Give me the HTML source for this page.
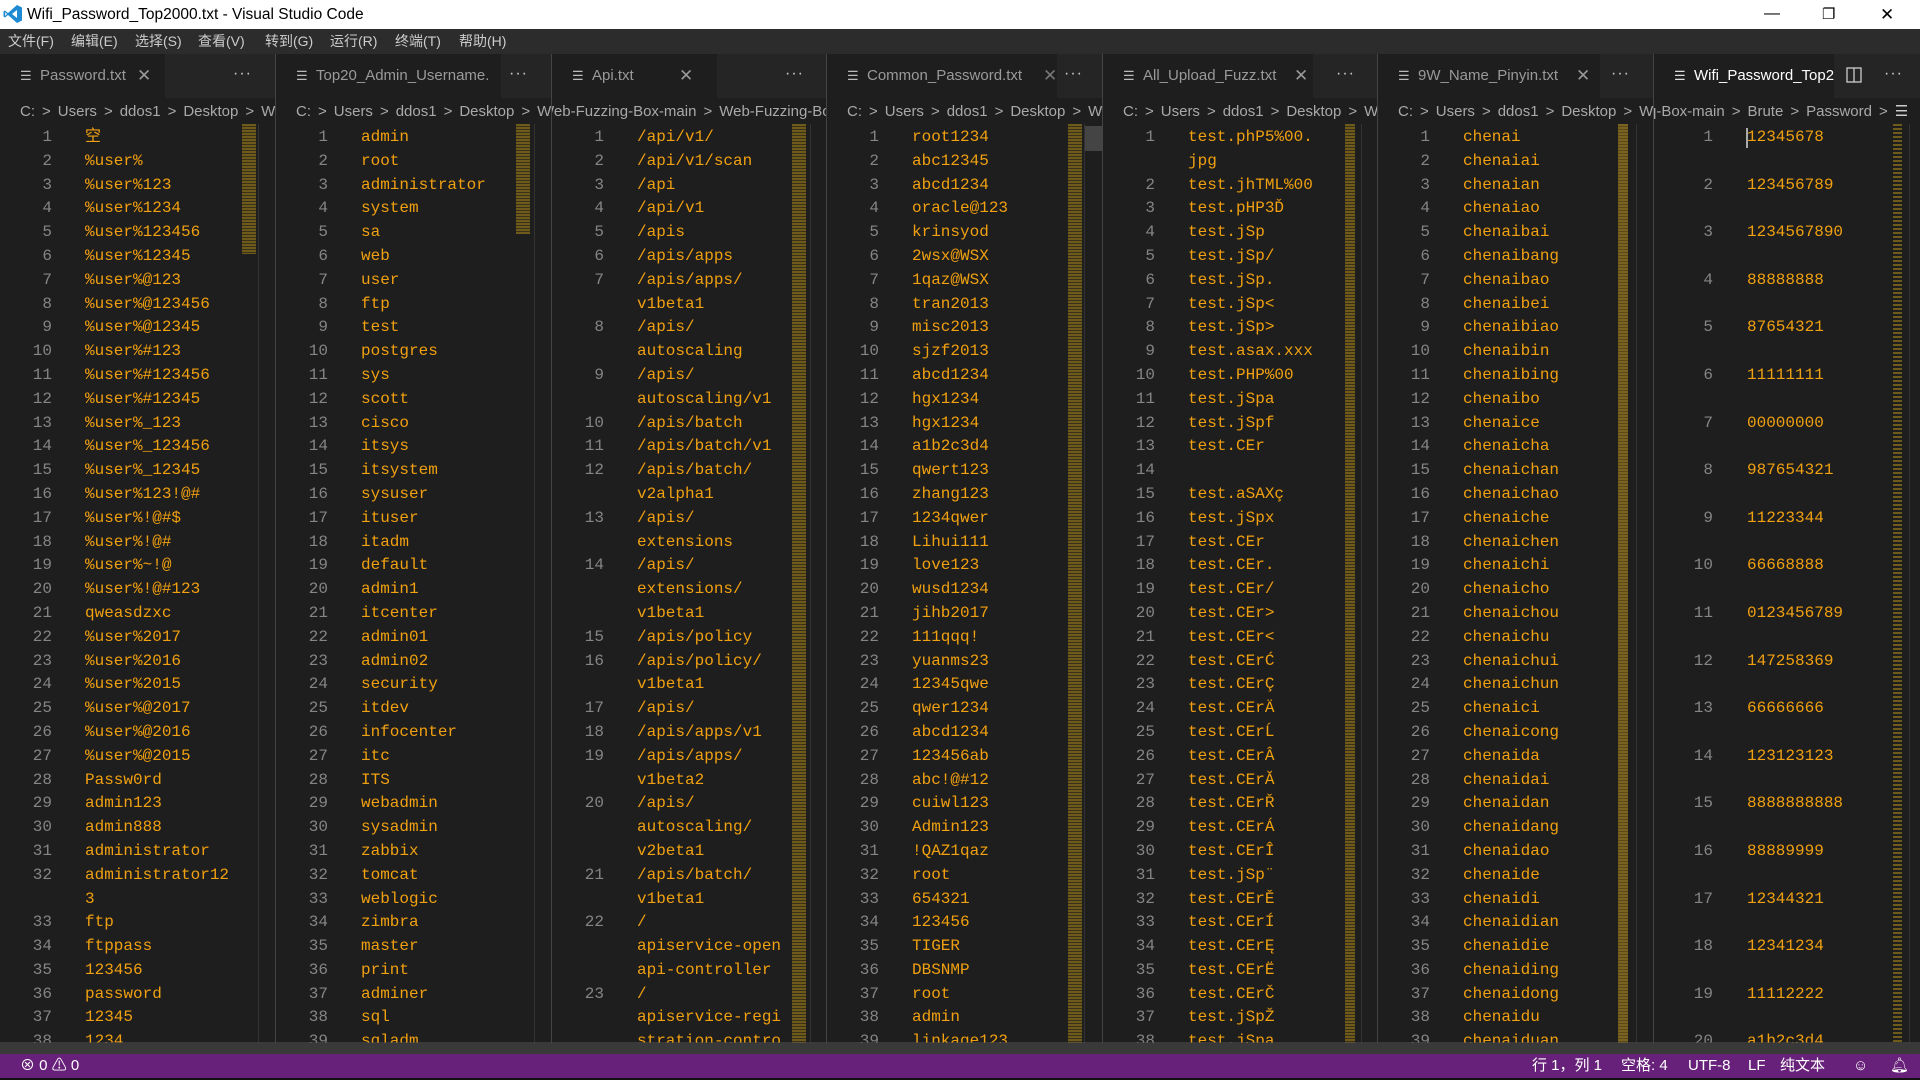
<!DOCTYPE html>
<html><head><meta charset="utf-8"><style>
*{margin:0;padding:0;box-sizing:border-box}
body{width:1920px;height:1080px;overflow:hidden;background:#1e1e1e;font-family:"Liberation Sans","Noto Sans CJK SC",sans-serif;position:relative}
#title{position:absolute;left:0;top:0;width:1920px;height:29px;background:#fff;color:#000;font-size:15.5px;line-height:29px}
#menu{position:absolute;left:0;top:29px;width:1920px;height:25px;background:#2c2c2c;color:#ccc;font-size:14px;line-height:25px}
#menu span{position:absolute;top:0}
.g{position:absolute;top:54px;height:989px;overflow:hidden;background:#1e1e1e;border-left:1px solid #444}
.tb{position:absolute;left:0;top:0;right:0;height:44px;background:#252526}
.tab{position:absolute;left:0;top:0;height:44px;width:165px;background:#1e1e1e;color:#9a9a9a;font-size:15px;line-height:44px;white-space:nowrap;overflow:hidden}
.tab .ic{position:absolute;left:20px;top:0;color:#bbb;font-size:13px}
.tab .nm{position:absolute;left:40px}
.tab .x{position:absolute;left:137px;color:#999;font-size:17px}
.dots{position:absolute;top:0;line-height:40px;color:#ccc;font-size:16px;letter-spacing:1px}
.bc{position:absolute;left:0;top:46px;height:24px;right:0;color:#a9a9a9;font-size:15px;line-height:24px;white-space:nowrap;overflow:hidden;padding-left:20px}
.bc s{text-decoration:none;margin:0 7px;color:#aaa}
.ed{position:absolute;left:0;top:72px;right:0;font-family:"Liberation Mono","Noto Sans CJK SC",monospace;font-size:16px}
.r{height:23.8px;line-height:23.8px;white-space:pre;position:relative;color:#f0a010;overflow:hidden}
.r i{font-style:normal;color:#858585;position:absolute;left:0;width:52px;text-align:right}
.r b{font-weight:normal;position:absolute;left:85px}
.mm{position:absolute;top:70px;width:14px;height:919px;background:repeating-linear-gradient(180deg,#6e5a1a 0 2px,#3a3218 2px 3px)}
.vs{position:absolute;top:70px;width:1px;height:919px;background:#333}
#hs{position:absolute;left:0;top:1042px;width:1920px;height:12px;background:rgba(80,80,80,.55)}
#st{position:absolute;left:0;top:1054px;width:1920px;height:24px;background:#68217a;color:#fff;font-size:15px;line-height:24px}
#st span{position:absolute;top:0}
#bot{position:absolute;left:0;top:1078px;width:1920px;height:2px;background:#111}
</style></head><body>
<div id="title">
<svg style="position:absolute;left:3px;top:4px" width="20" height="20" viewBox="0 0 20 20"><path d="M14 1 L19 3.5 V16.5 L14 19 L5 11 L2 13.5 L0.5 12.5 V7.5 L2 6.5 L5 9 Z M14 6 L9 10 L14 14 Z M2.2 8 V12 L4 10Z" fill="#1f8ad2" fill-rule="evenodd"/></svg>
<span style="position:absolute;left:27px">Wifi_Password_Top2000.txt - Visual Studio Code</span>
<span style="position:absolute;left:1764px;top:-1px;font-size:16px">—</span>
<span style="position:absolute;left:1822px;font-size:15px">❐</span>
<span style="position:absolute;left:1880px;font-size:17px">✕</span>
</div>
<div id="menu">
<span style="left:8px">文件(F)</span><span style="left:71px">编辑(E)</span><span style="left:135px">选择(S)</span><span style="left:198px">查看(V)</span><span style="left:265px">转到(G)</span><span style="left:330px">运行(R)</span><span style="left:395px">终端(T)</span><span style="left:459px">帮助(H)</span>
</div>

<!-- group 1 -->
<div class="g" style="left:0;width:276px;border-left:none">
<div class="tb"><div class="tab"><span class="ic">☰</span><span class="nm">Password.txt</span><span class="x">✕</span></div><span class="dots" style="left:233px">···</span></div>
<div class="bc">C:<s>&gt;</s>Users<s>&gt;</s>ddos1<s>&gt;</s>Desktop<s>&gt;</s>Web-Fuzzing</div>
<div class="ed">
<div class="r"><i>1</i><b>空</b></div><div class="r"><i>2</i><b>%user%</b></div><div class="r"><i>3</i><b>%user%123</b></div><div class="r"><i>4</i><b>%user%1234</b></div><div class="r"><i>5</i><b>%user%123456</b></div><div class="r"><i>6</i><b>%user%12345</b></div><div class="r"><i>7</i><b>%user%@123</b></div><div class="r"><i>8</i><b>%user%@123456</b></div><div class="r"><i>9</i><b>%user%@12345</b></div><div class="r"><i>10</i><b>%user%#123</b></div><div class="r"><i>11</i><b>%user%#123456</b></div><div class="r"><i>12</i><b>%user%#12345</b></div><div class="r"><i>13</i><b>%user%_123</b></div><div class="r"><i>14</i><b>%user%_123456</b></div><div class="r"><i>15</i><b>%user%_12345</b></div><div class="r"><i>16</i><b>%user%123!@#</b></div><div class="r"><i>17</i><b>%user%!@#$</b></div><div class="r"><i>18</i><b>%user%!@#</b></div><div class="r"><i>19</i><b>%user%~!@</b></div><div class="r"><i>20</i><b>%user%!@#123</b></div><div class="r"><i>21</i><b>qweasdzxc</b></div><div class="r"><i>22</i><b>%user%2017</b></div><div class="r"><i>23</i><b>%user%2016</b></div><div class="r"><i>24</i><b>%user%2015</b></div><div class="r"><i>25</i><b>%user%@2017</b></div><div class="r"><i>26</i><b>%user%@2016</b></div><div class="r"><i>27</i><b>%user%@2015</b></div><div class="r"><i>28</i><b>Passw0rd</b></div><div class="r"><i>29</i><b>admin123</b></div><div class="r"><i>30</i><b>admin888</b></div><div class="r"><i>31</i><b>administrator</b></div><div class="r"><i>32</i><b>administrator12</b></div><div class="r"><i></i><b>3</b></div><div class="r"><i>33</i><b>ftp</b></div><div class="r"><i>34</i><b>ftppass</b></div><div class="r"><i>35</i><b>123456</b></div><div class="r"><i>36</i><b>password</b></div><div class="r"><i>37</i><b>12345</b></div><div class="r"><i>38</i><b>1234</b></div><div class="r"><i>39</i><b>123</b></div>
</div>
<div class="mm" style="left:242px;height:130px"></div><div class="vs" style="left:258px"></div>
</div>

<!-- group 2 -->
<div class="g" style="left:275px;width:276px">
<div class="tb"><div class="tab" style="width:225px"><span class="ic">☰</span><span class="nm">Top20_Admin_Username.</span></div><span class="dots" style="left:233px">···</span></div>
<div class="bc">C:<s>&gt;</s>Users<s>&gt;</s>ddos1<s>&gt;</s>Desktop<s>&gt;</s>Web-Fuzzing</div>
<div class="ed">
<div class="r"><i>1</i><b>admin</b></div><div class="r"><i>2</i><b>root</b></div><div class="r"><i>3</i><b>administrator</b></div><div class="r"><i>4</i><b>system</b></div><div class="r"><i>5</i><b>sa</b></div><div class="r"><i>6</i><b>web</b></div><div class="r"><i>7</i><b>user</b></div><div class="r"><i>8</i><b>ftp</b></div><div class="r"><i>9</i><b>test</b></div><div class="r"><i>10</i><b>postgres</b></div><div class="r"><i>11</i><b>sys</b></div><div class="r"><i>12</i><b>scott</b></div><div class="r"><i>13</i><b>cisco</b></div><div class="r"><i>14</i><b>itsys</b></div><div class="r"><i>15</i><b>itsystem</b></div><div class="r"><i>16</i><b>sysuser</b></div><div class="r"><i>17</i><b>ituser</b></div><div class="r"><i>18</i><b>itadm</b></div><div class="r"><i>19</i><b>default</b></div><div class="r"><i>20</i><b>admin1</b></div><div class="r"><i>21</i><b>itcenter</b></div><div class="r"><i>22</i><b>admin01</b></div><div class="r"><i>23</i><b>admin02</b></div><div class="r"><i>24</i><b>security</b></div><div class="r"><i>25</i><b>itdev</b></div><div class="r"><i>26</i><b>infocenter</b></div><div class="r"><i>27</i><b>itc</b></div><div class="r"><i>28</i><b>ITS</b></div><div class="r"><i>29</i><b>webadmin</b></div><div class="r"><i>30</i><b>sysadmin</b></div><div class="r"><i>31</i><b>zabbix</b></div><div class="r"><i>32</i><b>tomcat</b></div><div class="r"><i>33</i><b>weblogic</b></div><div class="r"><i>34</i><b>zimbra</b></div><div class="r"><i>35</i><b>master</b></div><div class="r"><i>36</i><b>print</b></div><div class="r"><i>37</i><b>adminer</b></div><div class="r"><i>38</i><b>sql</b></div><div class="r"><i>39</i><b>sqladm</b></div><div class="r"><i>40</i><b>sqladmin</b></div>
</div>
<div class="mm" style="left:240px;height:110px"></div><div class="vs" style="left:258px"></div>
</div>

<!-- group 3 -->
<div class="g" style="left:551px;width:276px">
<div class="tb"><div class="tab"><span class="ic">☰</span><span class="nm">Api.txt</span><span class="x" style="left:127px">✕</span></div><span class="dots" style="left:233px">···</span></div>
<div class="bc" style="padding-left:0;text-indent:-12px">Web-Fuzzing-Box-main<s>&gt;</s>Web-Fuzzing-Box</div>
<div class="ed">
<div class="r"><i>1</i><b>/api/v1/</b></div><div class="r"><i>2</i><b>/api/v1/scan</b></div><div class="r"><i>3</i><b>/api</b></div><div class="r"><i>4</i><b>/api/v1</b></div><div class="r"><i>5</i><b>/apis</b></div><div class="r"><i>6</i><b>/apis/apps</b></div><div class="r"><i>7</i><b>/apis/apps/</b></div><div class="r"><i></i><b>v1beta1</b></div><div class="r"><i>8</i><b>/apis/</b></div><div class="r"><i></i><b>autoscaling</b></div><div class="r"><i>9</i><b>/apis/</b></div><div class="r"><i></i><b>autoscaling/v1</b></div><div class="r"><i>10</i><b>/apis/batch</b></div><div class="r"><i>11</i><b>/apis/batch/v1</b></div><div class="r"><i>12</i><b>/apis/batch/</b></div><div class="r"><i></i><b>v2alpha1</b></div><div class="r"><i>13</i><b>/apis/</b></div><div class="r"><i></i><b>extensions</b></div><div class="r"><i>14</i><b>/apis/</b></div><div class="r"><i></i><b>extensions/</b></div><div class="r"><i></i><b>v1beta1</b></div><div class="r"><i>15</i><b>/apis/policy</b></div><div class="r"><i>16</i><b>/apis/policy/</b></div><div class="r"><i></i><b>v1beta1</b></div><div class="r"><i>17</i><b>/apis/</b></div><div class="r"><i>18</i><b>/apis/apps/v1</b></div><div class="r"><i>19</i><b>/apis/apps/</b></div><div class="r"><i></i><b>v1beta2</b></div><div class="r"><i>20</i><b>/apis/</b></div><div class="r"><i></i><b>autoscaling/</b></div><div class="r"><i></i><b>v2beta1</b></div><div class="r"><i>21</i><b>/apis/batch/</b></div><div class="r"><i></i><b>v1beta1</b></div><div class="r"><i>22</i><b>/</b></div><div class="r"><i></i><b>apiservice-open</b></div><div class="r"><i></i><b>api-controller</b></div><div class="r"><i>23</i><b>/</b></div><div class="r"><i></i><b>apiservice-regi</b></div><div class="r"><i></i><b>stration-contro</b></div><div class="r"><i></i><b>ller</b></div>
</div>
<div class="mm" style="left:240px"></div><div class="vs" style="left:258px"></div>
</div>

<!-- group 4 -->
<div class="g" style="left:826px;width:276px">
<div class="tb"><div class="tab" style="width:230px"><span class="ic">☰</span><span class="nm">Common_Password.txt</span><span class="x" style="left:216px;color:#777">✕</span></div><span class="dots" style="left:233px;background:#252526;padding:0 4px">···</span></div>
<div class="bc">C:<s>&gt;</s>Users<s>&gt;</s>ddos1<s>&gt;</s>Desktop<s>&gt;</s>Web-Fuzzing</div>
<div class="ed">
<div class="r"><i>1</i><b>root1234</b></div><div class="r"><i>2</i><b>abc12345</b></div><div class="r"><i>3</i><b>abcd1234</b></div><div class="r"><i>4</i><b>oracle@123</b></div><div class="r"><i>5</i><b>krinsyod</b></div><div class="r"><i>6</i><b>2wsx@WSX</b></div><div class="r"><i>7</i><b>1qaz@WSX</b></div><div class="r"><i>8</i><b>tran2013</b></div><div class="r"><i>9</i><b>misc2013</b></div><div class="r"><i>10</i><b>sjzf2013</b></div><div class="r"><i>11</i><b>abcd1234</b></div><div class="r"><i>12</i><b>hgx1234</b></div><div class="r"><i>13</i><b>hgx1234</b></div><div class="r"><i>14</i><b>a1b2c3d4</b></div><div class="r"><i>15</i><b>qwert123</b></div><div class="r"><i>16</i><b>zhang123</b></div><div class="r"><i>17</i><b>1234qwer</b></div><div class="r"><i>18</i><b>Lihui111</b></div><div class="r"><i>19</i><b>love123</b></div><div class="r"><i>20</i><b>wusd1234</b></div><div class="r"><i>21</i><b>jihb2017</b></div><div class="r"><i>22</i><b>111qqq!</b></div><div class="r"><i>23</i><b>yuanms23</b></div><div class="r"><i>24</i><b>12345qwe</b></div><div class="r"><i>25</i><b>qwer1234</b></div><div class="r"><i>26</i><b>abcd1234</b></div><div class="r"><i>27</i><b>123456ab</b></div><div class="r"><i>28</i><b>abc!@#12</b></div><div class="r"><i>29</i><b>cuiwl123</b></div><div class="r"><i>30</i><b>Admin123</b></div><div class="r"><i>31</i><b>!QAZ1qaz</b></div><div class="r"><i>32</i><b>root</b></div><div class="r"><i>33</i><b>654321</b></div><div class="r"><i>34</i><b>123456</b></div><div class="r"><i>35</i><b>TIGER</b></div><div class="r"><i>36</i><b>DBSNMP</b></div><div class="r"><i>37</i><b>root</b></div><div class="r"><i>38</i><b>admin</b></div><div class="r"><i>39</i><b>linkage123</b></div><div class="r"><i>40</i><b>admin123</b></div>
</div>
<div class="mm" style="left:241px"></div><div class="vs" style="left:257px"></div>
<div style="position:absolute;left:258px;top:72px;width:17px;height:25px;background:#444"></div>
</div>

<!-- group 5 -->
<div class="g" style="left:1102px;width:276px">
<div class="tb"><div class="tab" style="width:210px"><span class="ic">☰</span><span class="nm">All_Upload_Fuzz.txt</span><span class="x" style="left:191px">✕</span></div><span class="dots" style="left:233px">···</span></div>
<div class="bc">C:<s>&gt;</s>Users<s>&gt;</s>ddos1<s>&gt;</s>Desktop<s>&gt;</s>Web-Fuzzing</div>
<div class="ed">
<div class="r"><i>1</i><b>test.phP5%00.</b></div><div class="r"><i></i><b>jpg</b></div><div class="r"><i>2</i><b>test.jhTML%00</b></div><div class="r"><i>3</i><b>test.pHP3Ď</b></div><div class="r"><i>4</i><b>test.jSp</b></div><div class="r"><i>5</i><b>test.jSp/</b></div><div class="r"><i>6</i><b>test.jSp.</b></div><div class="r"><i>7</i><b>test.jSp&lt;</b></div><div class="r"><i>8</i><b>test.jSp&gt;</b></div><div class="r"><i>9</i><b>test.asax.xxx</b></div><div class="r"><i>10</i><b>test.PHP%00</b></div><div class="r"><i>11</i><b>test.jSpa</b></div><div class="r"><i>12</i><b>test.jSpf</b></div><div class="r"><i>13</i><b>test.CEr</b></div><div class="r"><i>14</i><b></b></div><div class="r"><i>15</i><b>test.aSAXç</b></div><div class="r"><i>16</i><b>test.jSpx</b></div><div class="r"><i>17</i><b>test.CEr</b></div><div class="r"><i>18</i><b>test.CEr.</b></div><div class="r"><i>19</i><b>test.CEr/</b></div><div class="r"><i>20</i><b>test.CEr&gt;</b></div><div class="r"><i>21</i><b>test.CEr&lt;</b></div><div class="r"><i>22</i><b>test.CErĆ</b></div><div class="r"><i>23</i><b>test.CErÇ</b></div><div class="r"><i>24</i><b>test.CErÄ</b></div><div class="r"><i>25</i><b>test.CErĹ</b></div><div class="r"><i>26</i><b>test.CErÂ</b></div><div class="r"><i>27</i><b>test.CErĂ</b></div><div class="r"><i>28</i><b>test.CErŘ</b></div><div class="r"><i>29</i><b>test.CErÁ</b></div><div class="r"><i>30</i><b>test.CErÎ</b></div><div class="r"><i>31</i><b>test.jSp¨</b></div><div class="r"><i>32</i><b>test.CErĚ</b></div><div class="r"><i>33</i><b>test.CErÍ</b></div><div class="r"><i>34</i><b>test.CErĘ</b></div><div class="r"><i>35</i><b>test.CErË</b></div><div class="r"><i>36</i><b>test.CErČ</b></div><div class="r"><i>37</i><b>test.jSpŽ</b></div><div class="r"><i>38</i><b>test.jSpą</b></div><div class="r"><i>39</i><b>test.jSpb</b></div>
</div>
<div class="mm" style="left:242px;width:10px"></div><div class="vs" style="left:258px"></div>
</div>

<!-- group 6 -->
<div class="g" style="left:1377px;width:276px">
<div class="tb"><div class="tab" style="width:222px"><span class="ic">☰</span><span class="nm">9W_Name_Pinyin.txt</span><span class="x" style="left:198px">✕</span></div><span class="dots" style="left:233px">···</span></div>
<div class="bc">C:<s>&gt;</s>Users<s>&gt;</s>ddos1<s>&gt;</s>Desktop<s>&gt;</s>Web-Fuzzing</div>
<div class="ed">
<div class="r"><i>1</i><b>chenai</b></div><div class="r"><i>2</i><b>chenaiai</b></div><div class="r"><i>3</i><b>chenaian</b></div><div class="r"><i>4</i><b>chenaiao</b></div><div class="r"><i>5</i><b>chenaibai</b></div><div class="r"><i>6</i><b>chenaibang</b></div><div class="r"><i>7</i><b>chenaibao</b></div><div class="r"><i>8</i><b>chenaibei</b></div><div class="r"><i>9</i><b>chenaibiao</b></div><div class="r"><i>10</i><b>chenaibin</b></div><div class="r"><i>11</i><b>chenaibing</b></div><div class="r"><i>12</i><b>chenaibo</b></div><div class="r"><i>13</i><b>chenaice</b></div><div class="r"><i>14</i><b>chenaicha</b></div><div class="r"><i>15</i><b>chenaichan</b></div><div class="r"><i>16</i><b>chenaichao</b></div><div class="r"><i>17</i><b>chenaiche</b></div><div class="r"><i>18</i><b>chenaichen</b></div><div class="r"><i>19</i><b>chenaichi</b></div><div class="r"><i>20</i><b>chenaicho</b></div><div class="r"><i>21</i><b>chenaichou</b></div><div class="r"><i>22</i><b>chenaichu</b></div><div class="r"><i>23</i><b>chenaichui</b></div><div class="r"><i>24</i><b>chenaichun</b></div><div class="r"><i>25</i><b>chenaici</b></div><div class="r"><i>26</i><b>chenaicong</b></div><div class="r"><i>27</i><b>chenaida</b></div><div class="r"><i>28</i><b>chenaidai</b></div><div class="r"><i>29</i><b>chenaidan</b></div><div class="r"><i>30</i><b>chenaidang</b></div><div class="r"><i>31</i><b>chenaidao</b></div><div class="r"><i>32</i><b>chenaide</b></div><div class="r"><i>33</i><b>chenaidi</b></div><div class="r"><i>34</i><b>chenaidian</b></div><div class="r"><i>35</i><b>chenaidie</b></div><div class="r"><i>36</i><b>chenaiding</b></div><div class="r"><i>37</i><b>chenaidong</b></div><div class="r"><i>38</i><b>chenaidu</b></div><div class="r"><i>39</i><b>chenaiduan</b></div><div class="r"><i>40</i><b>chenaidui</b></div>
</div>
<div class="mm" style="left:240px;width:10px;background:repeating-linear-gradient(180deg,#7a6220 0 2px,#5a4a1a 2px 3px)"></div><div class="vs" style="left:258px"></div>
</div>

<!-- group 7 -->
<div class="g" style="left:1653px;width:267px">
<div class="tb"><div class="tab" style="width:180px;color:#fff"><span class="ic" style="color:#ddd">☰</span><span class="nm">Wifi_Password_Top2</span></div>
<svg style="position:absolute;left:192px;top:13px" width="16" height="16" viewBox="0 0 16 16"><rect x="1" y="1" width="14" height="14" fill="none" stroke="#ccc" stroke-width="1.3"/><line x1="8" y1="1" x2="8" y2="15" stroke="#ccc" stroke-width="1.3"/></svg>
<span class="dots" style="left:230px">···</span></div>
<div class="bc" style="padding-left:0;text-indent:-6px">q-Box-main<s>&gt;</s>Brute<s>&gt;</s>Password<s>&gt;</s><span style="color:#ccc">☰</span></div>
<div class="ed">
<div style="position:absolute;left:92px;top:2px;width:2px;height:20px;background:#aaa"></div>
<div class="r"><i style="width:59px">1</i><b style="left:93px">12345678</b></div><div class="r"></div>
<div class="r"><i style="width:59px">2</i><b style="left:93px">123456789</b></div><div class="r"></div>
<div class="r"><i style="width:59px">3</i><b style="left:93px">1234567890</b></div><div class="r"></div>
<div class="r"><i style="width:59px">4</i><b style="left:93px">88888888</b></div><div class="r"></div>
<div class="r"><i style="width:59px">5</i><b style="left:93px">87654321</b></div><div class="r"></div>
<div class="r"><i style="width:59px">6</i><b style="left:93px">11111111</b></div><div class="r"></div>
<div class="r"><i style="width:59px">7</i><b style="left:93px">00000000</b></div><div class="r"></div>
<div class="r"><i style="width:59px">8</i><b style="left:93px">987654321</b></div><div class="r"></div>
<div class="r"><i style="width:59px">9</i><b style="left:93px">11223344</b></div><div class="r"></div>
<div class="r"><i style="width:59px">10</i><b style="left:93px">66668888</b></div><div class="r"></div>
<div class="r"><i style="width:59px">11</i><b style="left:93px">0123456789</b></div><div class="r"></div>
<div class="r"><i style="width:59px">12</i><b style="left:93px">147258369</b></div><div class="r"></div>
<div class="r"><i style="width:59px">13</i><b style="left:93px">66666666</b></div><div class="r"></div>
<div class="r"><i style="width:59px">14</i><b style="left:93px">123123123</b></div><div class="r"></div>
<div class="r"><i style="width:59px">15</i><b style="left:93px">8888888888</b></div><div class="r"></div>
<div class="r"><i style="width:59px">16</i><b style="left:93px">88889999</b></div><div class="r"></div>
<div class="r"><i style="width:59px">17</i><b style="left:93px">12344321</b></div><div class="r"></div>
<div class="r"><i style="width:59px">18</i><b style="left:93px">12341234</b></div><div class="r"></div>
<div class="r"><i style="width:59px">19</i><b style="left:93px">11112222</b></div><div class="r"></div>
<div class="r"><i style="width:59px">20</i><b style="left:93px">a1b2c3d4</b></div>
</div>
<div class="mm" style="left:239px;width:9px;background:repeating-linear-gradient(180deg,#6e5a1a 0 2px,#1e1e1e 2px 4px)"></div><div class="vs" style="left:255px"></div>
</div>

<div id="hs"></div>
<div id="st">
<span style="left:20px">⊗ 0 <span style="position:static">⚠</span> 0</span>
<span style="left:1532px">行 1，列 1</span>
<span style="left:1621px">空格: 4</span>
<span style="left:1688px">UTF-8</span>
<span style="left:1748px">LF</span>
<span style="left:1780px">纯文本</span>
<span style="left:1853px;font-size:15px">☺</span>
<span style="left:1890px;font-size:15px">🔔︎</span>
</div>
<div id="bot"></div>
</body></html>
